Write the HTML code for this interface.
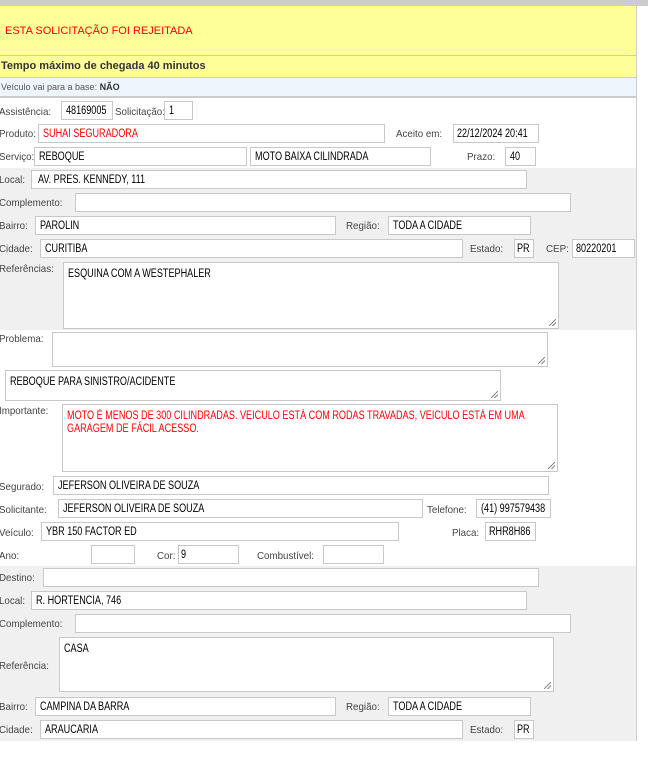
<!DOCTYPE html>
<html><head><meta charset="utf-8"><style>
*{margin:0;padding:0;box-sizing:border-box}
body{width:648px;height:760px;background:#fff;position:relative;overflow:hidden;font-family:"Liberation Sans",sans-serif;font-size:10.5px;color:#444}
div{position:absolute}
.l{white-space:nowrap;line-height:13px;margin-top:1px;transform:scaleX(.93);transform-origin:0 0}
.i{border:1px solid #c8c8c8;background:#fff;color:#000;font-size:11.5px;padding:3px 4px 1px;white-space:nowrap;overflow:hidden;height:19px;line-height:13px}
.t{border:1px solid #c8c8c8;background:#fff;color:#000;font-size:11.5px;padding:5px 4px;line-height:13px;overflow:hidden;white-space:nowrap}
.s{display:inline-block;transform:scaleX(.79);transform-origin:0 0}
.t:after{content:"";position:absolute;right:2px;bottom:2px;width:7px;height:7px;background:linear-gradient(135deg,transparent 45%,#888 45%,#888 55%,transparent 55%,transparent 70%,#888 70%,#888 80%,transparent 80%)}
</style></head><body>
<div style="left:0;top:0;width:648px;height:6px;background:#ccc"></div>
<div style="left:0;top:6px;width:637px;height:735px;border-right:1px solid #ccc;border-bottom:1px solid #ccc"></div>
<div style="left:0;top:6px;width:636px;height:49px;background:#ffff99"></div>
<div class="l" style="left:5px;top:24px;color:#f00;font-size:11px;transform:none">ESTA SOLICITAÇÃO FOI REJEITADA</div>
<div style="left:0;top:55px;width:636px;height:1px;background:#ccc"></div>
<div style="left:0;top:56px;width:636px;height:21px;background:#ffff99"></div>
<div class="l" style="left:1px;top:59px;font-weight:bold;color:#333;font-size:11px;transform:none">Tempo máximo de chegada 40 minutos</div>
<div style="left:0;top:77px;width:636px;height:1px;background:#ccc"></div>
<div style="left:0;top:78px;width:636px;height:19px;background:#eef5fd"></div>
<div class="l" style="left:1px;top:80px;font-size:9px;color:#555;transform:none">Veículo vai para a base: <b style="color:#333">NÃO</b></div>
<div style="left:0;top:96px;width:636px;height:2px;background:#ccc"></div>

<div class="l" style="left:-1px;top:105px">Assistência:</div>
<div class="i" style="left:61px;top:101px;width:52px"><span class="s">48169005</span></div>
<div class="l" style="left:115px;top:105px">Solicitação:</div>
<div class="i" style="left:164px;top:101px;width:29px"><span class="s">1</span></div>

<div class="l" style="left:-1px;top:127px">Produto:</div>
<div class="i" style="left:38px;top:124px;width:347px;color:#f00"><span class="s">SUHAI SEGURADORA</span></div>
<div class="l" style="left:396px;top:127px">Aceito em:</div>
<div class="i" style="left:453px;top:124px;width:86px;padding-left:3px"><span class="s">22/12/2024 20:41</span></div>

<div class="l" style="left:-1px;top:150px">Serviço:</div>
<div class="i" style="left:34px;top:147px;width:213px"><span class="s">REBOQUE</span></div>
<div class="i" style="left:250px;top:147px;width:181px"><span class="s">MOTO BAIXA CILINDRADA</span></div>
<div class="l" style="left:467px;top:150px">Prazo:</div>
<div class="i" style="left:505px;top:147px;width:31px"><span class="s">40</span></div>

<div style="left:0;top:168px;width:636px;height:162px;background:#f0f0f0"></div>
<div class="l" style="left:-1px;top:173px">Local:</div>
<div class="i" style="left:31px;top:170px;width:496px;padding-left:6px"><span class="s">AV. PRES. KENNEDY, 111</span></div>
<div class="l" style="left:-1px;top:196px">Complemento:</div>
<div class="i" style="left:75px;top:193px;width:496px"></div>
<div class="l" style="left:-1px;top:219px">Bairro:</div>
<div class="i" style="left:35px;top:216px;width:301px"><span class="s">PAROLIN</span></div>
<div class="l" style="left:346px;top:219px">Região:</div>
<div class="i" style="left:388px;top:216px;width:143px"><span class="s">TODA A CIDADE</span></div>
<div class="l" style="left:-1px;top:242px">Cidade:</div>
<div class="i" style="left:40px;top:239px;width:423px"><span class="s">CURITIBA</span></div>
<div class="l" style="left:470px;top:242px">Estado:</div>
<div class="i" style="left:514px;top:239px;width:20px;padding:3px 2px 1px"><span class="s">PR</span></div>
<div class="l" style="left:546px;top:242px">CEP:</div>
<div class="i" style="left:572px;top:239px;width:63px;padding-left:3px"><span class="s">80220201</span></div>
<div class="l" style="left:-1px;top:262px">Referências:</div>
<div class="t" style="left:63px;top:262px;width:496px;height:67px"><span class="s">ESQUINA COM A WESTEPHALER</span></div>

<div class="l" style="left:-1px;top:332px">Problema:</div>
<div class="t" style="left:52px;top:332px;width:496px;height:35px"></div>
<div class="t" style="left:5px;top:370px;width:496px;height:31px"><span class="s">REBOQUE PARA SINISTRO/ACIDENTE</span></div>
<div class="l" style="left:-1px;top:404px">Importante:</div>
<div class="t" style="left:62px;top:404px;width:496px;height:68px;color:#f00"><span class="s">MOTO É MENOS DE 300 CILINDRADAS. VEICULO ESTÁ COM RODAS TRAVADAS, VEICULO ESTÁ EM UMA<br>GARAGEM DE FÁCIL ACESSO.</span></div>

<div class="l" style="left:-1px;top:480px">Segurado:</div>
<div class="i" style="left:53px;top:476px;width:496px"><span class="s">JEFERSON OLIVEIRA DE SOUZA</span></div>
<div class="l" style="left:-1px;top:503px">Solicitante:</div>
<div class="i" style="left:58px;top:499px;width:365px"><span class="s">JEFERSON OLIVEIRA DE SOUZA</span></div>
<div class="l" style="left:427px;top:503px">Telefone:</div>
<div class="i" style="left:476px;top:499px;width:75px"><span class="s">(41) 997579438</span></div>
<div class="l" style="left:-1px;top:526px">Veículo:</div>
<div class="i" style="left:41px;top:522px;width:358px"><span class="s">YBR 150 FACTOR ED</span></div>
<div class="l" style="left:452px;top:526px">Placa:</div>
<div class="i" style="left:485px;top:522px;width:51px;padding-left:3px"><span class="s">RHR8H86</span></div>
<div class="l" style="left:-1px;top:549px">Ano:</div>
<div class="i" style="left:91px;top:545px;width:44px"></div>
<div class="l" style="left:157px;top:549px">Cor:</div>
<div class="i" style="left:178px;top:545px;width:61px;padding-left:2px"><span class="s">9</span></div>
<div class="l" style="left:257px;top:549px">Combustível:</div>
<div class="i" style="left:323px;top:545px;width:61px"></div>

<div style="left:0;top:566px;width:636px;height:175px;background:#f0f0f0"></div>
<div class="l" style="left:-1px;top:571px">Destino:</div>
<div class="i" style="left:43px;top:568px;width:496px"></div>
<div class="l" style="left:-1px;top:594px">Local:</div>
<div class="i" style="left:31px;top:591px;width:496px"><span class="s">R. HORTENCIA, 746</span></div>
<div class="l" style="left:-1px;top:617px">Complemento:</div>
<div class="i" style="left:75px;top:614px;width:496px"></div>
<div class="l" style="left:-1px;top:659px">Referência:</div>
<div class="t" style="left:59px;top:637px;width:495px;height:55px"><span class="s">CASA</span></div>
<div class="l" style="left:-1px;top:700px">Bairro:</div>
<div class="i" style="left:35px;top:697px;width:301px"><span class="s">CAMPINA DA BARRA</span></div>
<div class="l" style="left:346px;top:700px">Região:</div>
<div class="i" style="left:388px;top:697px;width:143px"><span class="s">TODA A CIDADE</span></div>
<div class="l" style="left:-1px;top:723px">Cidade:</div>
<div class="i" style="left:40px;top:720px;width:423px"><span class="s">ARAUCARIA</span></div>
<div class="l" style="left:470px;top:723px">Estado:</div>
<div class="i" style="left:514px;top:720px;width:20px;padding:3px 2px 1px"><span class="s">PR</span></div>
</body></html>
